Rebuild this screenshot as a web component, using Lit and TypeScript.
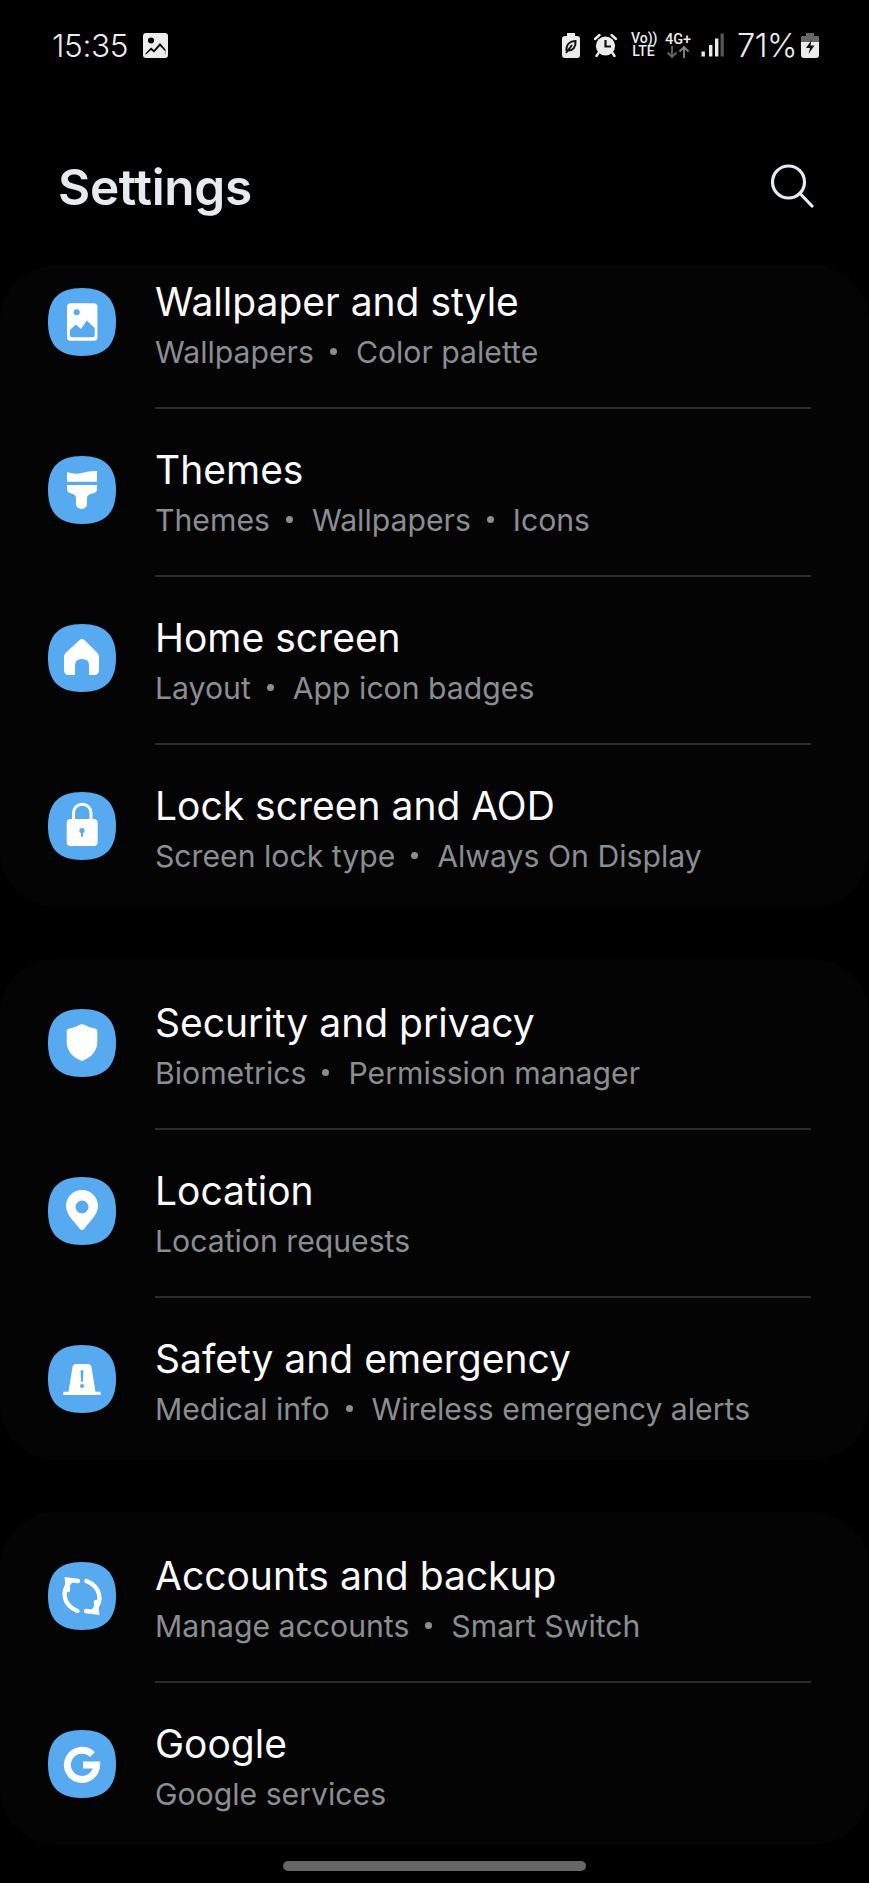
import { LitElement, html, css, svg } from "lit";
import { customElement } from "lit/decorators.js";

const B = "#57aaf0";
const W = "#ffffff";

const glyphs: Record<string, unknown> = {
  wallpaper: svg`<rect x="19" y="15.3" width="30.4" height="37.4" rx="3.5" fill="${W}"/>
    <circle cx="28.7" cy="24.3" r="3" fill="${B}"/>
    <path d="M22 42 L27.7 36.5 L33 41 L38.7 32.5 L46.7 40 V47.5 Q46.7 49.3 45 49.3 H23.7 Q22 49.3 22 47.5Z" fill="${B}"/>`,
  brush: svg`<path d="M19 16 Q27 19 34 17 Q42 14.5 49 15 V25.7 H19Z" fill="${W}"/>
    <path d="M19 29 H49 V33 Q49 36 46 37 L41.5 38.5 Q39 39.5 39 42 V48 A5.5 5 0 0 1 28 48 V42 Q28 39.5 26 38.5 L22 37 Q19 36 19 33Z" fill="${W}"/>`,
  home: svg`<path d="M31.6 16 L17.5 29 Q16 30.4 16 33 V46 Q16 51 21 51 H27 V41 Q27 35 34 35 Q41 35 41 41 V51 H46 Q51 51 51 46 V33 Q51 30.4 49.5 29 L36.4 16 Q34 14 31.6 16Z" fill="${W}"/>`,
  lock: svg`<path d="M25.5 28 V21 A8.7 8.7 0 0 1 43 21 V28" fill="none" stroke="${W}" stroke-width="3"/>
    <rect x="18.7" y="27" width="31" height="27" rx="4" fill="${W}"/>
    <circle cx="34" cy="38.5" r="2.6" fill="${B}"/>
    <rect x="33" y="39" width="2" height="6" rx="1" fill="${B}"/>`,
  shield: svg`<path d="M32.5 15.6 Q26 19 20.5 19.8 Q18.7 20 18.7 22 V33 Q18.7 45 32.5 51.6 Q34 52.4 35.5 51.6 Q49.3 45 49.3 33 V22 Q49.3 20 47.5 19.8 Q42 19 35.5 15.6 Q34 15 32.5 15.6Z" fill="${W}"/>`,
  pin: svg`<path d="M34 13 C25 13 18 20 18 29 C18 38 27 45 31.5 51.5 Q34 54.5 36.5 51.5 C41 45 50 38 50 29 C50 20 43 13 34 13Z" fill="${W}"/>
    <circle cx="34" cy="30" r="6.5" fill="${B}"/>`,
  siren: svg`<path d="M24.5 22 Q25 19 28.5 19 H39.5 Q43 19 43.5 22 L47.5 46.7 H52.7 V50 H15.3 V46.7 H20.5Z" fill="${W}"/>
    <path d="M32.6 25.3 H35.4 L35 36.7 H33Z" fill="${B}"/>
    <circle cx="34" cy="41" r="2" fill="${B}"/>`,
  sync: svg`<g fill="none" stroke="${W}" stroke-width="4.4" stroke-linecap="round" stroke-linejoin="miter">
      <path d="M22 20 C13 29 15 43 29.5 49"/><path d="M20 28 L19 17.5 L30 19"/>
      <g transform="rotate(180 34 34)"><path d="M22 20 C13 29 15 43 29.5 49"/><path d="M20 28 L19 17.5 L30 19"/></g>
    </g>`,
  google: svg`<path d="M44.4 24.6 A14.6 14.6 0 1 0 48.6 35 H35" fill="none" stroke="${W}" stroke-width="7"/>`,
};

type Row = { icon: string; title: string; sub: string[] };
const groups: Row[][] = [
  [
    { icon: "wallpaper", title: "Wallpaper and style", sub: ["Wallpapers", "Color palette"] },
    { icon: "brush", title: "Themes", sub: ["Themes", "Wallpapers", "Icons"] },
    { icon: "home", title: "Home screen", sub: ["Layout", "App icon badges"] },
    { icon: "lock", title: "Lock screen and AOD", sub: ["Screen lock type", "Always On Display"] },
  ],
  [
    { icon: "shield", title: "Security and privacy", sub: ["Biometrics", "Permission manager"] },
    { icon: "pin", title: "Location", sub: ["Location requests"] },
    { icon: "siren", title: "Safety and emergency", sub: ["Medical info", "Wireless emergency alerts"] },
  ],
  [
    { icon: "sync", title: "Accounts and backup", sub: ["Manage accounts", "Smart Switch"] },
    { icon: "google", title: "Google", sub: ["Google services"] },
  ],
];

@customElement("app-root")
export class AppRoot extends LitElement {
  static styles = css`
    :host {
      display: block;
      width: 869px;
      height: 1883px;
      overflow: hidden;
      background: #000;
      font-family: Inter, "Noto Sans", sans-serif;
    }
    .status {
      height: 90px;
      display: flex;
      align-items: center;
      padding: 0 50px 0 52px;
      color: #ececec;
    }
    .time {
      font-size: 31.6px;
      font-weight: 300;
      letter-spacing: -0.4px;
      width: 91px;
    }
    .status svg {
      display: block;
      flex: none;
    }
    .right {
      margin-left: auto;
      display: flex;
      align-items: center;
    }
    .m14 { margin-left: 14px; }
    .m9 { margin-left: 9px; }
    .m10 { margin-left: 10px; }
    .m13 { margin-left: 13px; }
    .m6 { margin-left: 6px; }
    .net {
      font-family: Roboto, sans-serif;
      font-weight: 500;
      font-size: 14px;
      line-height: 13.5px;
      width: 25px;
      text-align: center;
      white-space: nowrap;
    }
    .g4 {
      font-family: Roboto, sans-serif;
      font-weight: 500;
      font-size: 14.5px;
      line-height: 13px;
      width: 26px;
      display: flex;
      flex-direction: column;
      align-items: center;
    }
    .pct {
      font-size: 32.6px;
      font-weight: 300;
      letter-spacing: -0.5px;
      width: 58px;
      white-space: nowrap;
    }
    .head {
      height: 100px;
      margin: 46px 0 29px;
      padding: 0 55px 0 58px;
      display: flex;
      align-items: center;
      justify-content: space-between;
    }
    h1 {
      margin: 2px 0 0;
      font-size: 49.5px;
      font-weight: 600;
      color: #e6ebf2;
      letter-spacing: -0.3px;
    }
    .card {
      background: #040404;
      border-radius: 56px;
      overflow: hidden;
      margin-bottom: 52px;
    }
    .row {
      height: 162px;
      display: flex;
      align-items: center;
      padding-left: 48px;
      gap: 39px;
    }
    .first {
      margin-top: 3px;
    }
    .scrolled {
      margin-top: -24px;
    }
    .row svg {
      flex: none;
      display: block;
    }
    .text {
      padding-top: 8px;
    }
    .t {
      font-size: 39px;
      line-height: 46px;
      color: #fbfbfb;
      font-weight: 400;
      white-space: nowrap;
    }
    .s {
      font-size: 30.2px;
      line-height: 44px;
      margin-top: 5px;
      color: #8a8e91;
      white-space: nowrap;
      display: flex;
      align-items: center;
    }
    .dot {
      width: 7px;
      height: 7px;
      border-radius: 50%;
      background: #8a8e91;
      margin: 0 19px 0 16px;
    }
    .rule {
      height: 6px;
      padding-top: 4px;
      box-sizing: border-box;
      margin: 0 58px 0 155px;
    }
    .rule i {
      display: block;
      height: 2px;
      background: #2c2c2c;
    }
    .pill {
      width: 303px;
      height: 10px;
      border-radius: 5px;
      background: #666;
      margin: -36px 0 0 283px;
    }
  `;

  private icon(name: string) {
    return html`<svg width="68" height="68" viewBox="0 0 68 68">
      <path d="M34 0 C57 0 68 11 68 34 C68 57 57 68 34 68 C11 68 0 57 0 34 C0 11 11 0 34 0Z" fill="${B}"/>
      ${glyphs[name]}
    </svg>`;
  }

  private renderRow(r: Row, cls: string) {
    return html`<div class="row ${cls}">
      ${this.icon(r.icon)}
      <div class="text">
        <div class="t">${r.title}</div>
        <div class="s">
          ${r.sub.map((x, i) => html`${i ? html`<span class="dot"></span>` : ""}<span>${x}</span>`)}
        </div>
      </div>
    </div>`;
  }

  render() {
    const L = "#ececec";
    return html`
      <div class="status">
        <span class="time">15:35</span>
        <svg width="25" height="25" viewBox="0 0 25 25">
          <rect width="25" height="25" rx="3" fill="${L}"/>
          <circle cx="8" cy="7.5" r="3" fill="#000"/>
          <path d="M2.5 20.5 L8 14.5 L11 17 L17 10 L22.5 16.5 V21.5 H2.5Z" fill="#000"/>
          <path d="M2.5 22 L8 17 L11 19.5 L17 13 L22.5 18.5 V23 H2.5Z" fill="${L}"/>
        </svg>
        <div class="right">
          <svg width="18" height="25" viewBox="0 0 18 25">
            <path d="M5 0 H13 V3 H15 Q18 3 18 6 V22 Q18 25 15 25 H3 Q0 25 0 22 V6 Q0 3 3 3 H5Z" fill="${L}"/>
            <path d="M4.5 18 C4 11 8 8 13.5 8 C14 14 11 18 6 17.5 M4 20 L10 12" fill="none" stroke="#111" stroke-width="2"/>
          </svg>
          <svg class="m14" width="23" height="24" viewBox="0 0 23 24">
            <circle cx="11.5" cy="13" r="9.6" fill="${L}"/>
            <path d="M1 6 L5.5 2 M22 6 L17.5 2 M4.5 20 L2.5 23 M18.5 20 L20.5 23" stroke="${L}" stroke-width="2.4" stroke-linecap="round"/>
            <path d="M11.5 7 V13.5 H17" fill="none" stroke="#111" stroke-width="2.2"/>
          </svg>
          <div class="net m14">Vo))<br />LTE</div>
          <div class="g4 m9">
            <span>4G+</span>
            <svg width="24" height="12" viewBox="0 0 24 12">
              <path d="M6 0 V11 M1.5 6.5 L6 11 L10.5 6.5" fill="none" stroke="#666" stroke-width="1.8"/>
              <path d="M18 12 V1 M13.5 5.5 L18 1 L22.5 5.5" fill="none" stroke="#888" stroke-width="1.8"/>
            </svg>
          </div>
          <svg class="m10" width="23" height="24" viewBox="0 0 23 24">
            <rect x="0.5" y="18.5" width="3.4" height="5" fill="${L}"/>
            <rect x="8" y="12" width="3.4" height="11.5" fill="${L}"/>
            <rect x="14" y="5.5" width="3.4" height="18" fill="${L}"/>
            <rect x="19.6" y="0.5" width="3.2" height="23" fill="#555"/>
          </svg>
          <span class="pct m13">71%</span>
          <svg class="m6" width="18" height="25" viewBox="0 0 18 25">
            <path d="M5 0 H13 V3 H15 Q18 3 18 6 V22 Q18 25 15 25 H3 Q0 25 0 22 V6 Q0 3 3 3 H5Z" fill="${L}"/>
            <path d="M5 0 H13 V3 H15 Q18 3 18 6 V9 H0 V6 Q0 3 3 3 H5Z" fill="#666"/>
            <path d="M10.5 7 L5 15 H9 L7.5 21 L13.5 12.5 H9.5Z" fill="#111"/>
          </svg>
        </div>
      </div>
      <div class="head">
        <h1>Settings</h1>
        <svg width="44" height="44" viewBox="0 0 44 44">
          <circle cx="18.5" cy="18" r="16" fill="none" stroke="#e6ebf2" stroke-width="3.2"/>
          <path d="M30 29.5 L42 42" stroke="#e6ebf2" stroke-width="3.2" stroke-linecap="round"/>
        </svg>
      </div>
      ${groups.map(
        (g, gi) => html`<div class="card">
          ${g.map(
            (r, i) => html`${i ? html`<div class="rule"><i></i></div>` : ""}${this.renderRow(
              r,
              i ? "" : gi ? "first" : "scrolled",
            )}`,
          )}
        </div>`,
      )}
      <div class="pill"></div>
    `;
  }
}
